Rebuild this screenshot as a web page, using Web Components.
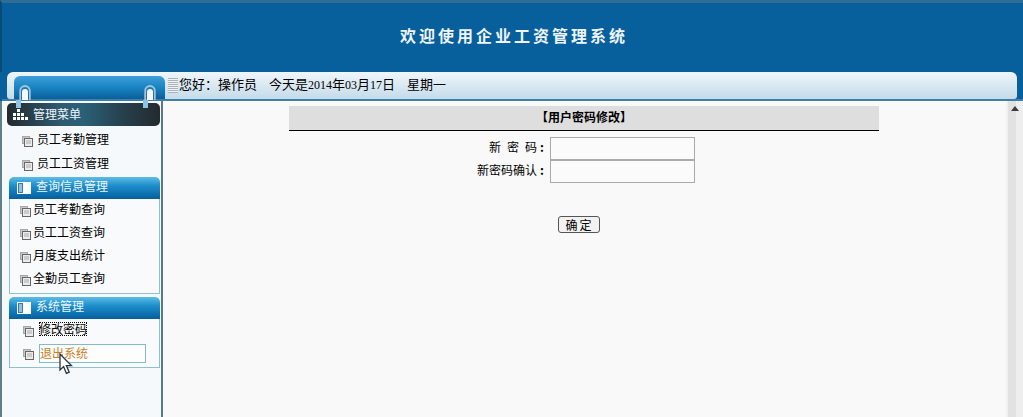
<!DOCTYPE html>
<html lang="zh">
<head>
<meta charset="UTF-8">
<title>企业工资管理系统</title>
<style>
html,body{margin:0;padding:0;height:100%;overflow:hidden;background:#f9f9f9}
body{font:12px "Noto Sans CJK SC","Liberation Sans",sans-serif;color:#000}
tool-bar .n{font:12px "Liberation Serif",serif}
tool-bar .gap{display:inline-block;width:12px}
</style>
</head>
<body>
<app-shell>
  <top-banner slot="top">欢迎使用企业工资管理系统</top-banner>
  <tool-bar slot="bar">您好：操作员<span class="gap"></span>今天是<span class="n">2014</span>年<span class="n">03</span>月<span class="n">17</span>日<span class="gap"></span>星期一</tool-bar>
  <side-menu slot="side">
    <menu-panel title="管理菜单" kind="dark">
      <menu-item kind="tall">员工考勤管理</menu-item>
      <menu-item kind="tall">员工工资管理</menu-item>
    </menu-panel>
    <menu-panel title="查询信息管理" kind="blue">
      <menu-item kind="tight">员工考勤查询</menu-item>
      <menu-item kind="tight">员工工资查询</menu-item>
      <menu-item kind="tight">月度支出统计</menu-item>
      <menu-item kind="tight">全勤员工查询</menu-item>
    </menu-panel>
    <menu-panel title="系统管理" kind="blue">
      <menu-item state="focus">修改密码</menu-item>
      <menu-item state="hover">退出系统</menu-item>
    </menu-panel>
  </side-menu>
  <main-pane slot="main">
    <pwd-form></pwd-form>
  </main-pane>
</app-shell>

<script>
class AppShell extends HTMLElement {
  constructor() {
    super();
    this.attachShadow({ mode: 'open' }).innerHTML = `
      <style>
        :host{display:grid;grid-template-columns:163px 1fr;grid-template-rows:72px 29px 1fr;width:1023px;height:417px;overflow:hidden;position:relative}
        .top{grid-column:1/3}
        .bar{grid-column:1/3}
        .cursor{position:absolute;left:59px;top:353px;width:14px;height:22px}
      </style>
      <div class="top"><slot name="top"></slot></div>
      <div class="bar"><slot name="bar"></slot></div>
      <slot name="side"></slot>
      <slot name="main"></slot>
      <svg class="cursor" viewBox="0 0 14 22"><path d="M1 1V17L4.6 13.6L7.4 20.4L10.2 19.2L7.4 12.6H12.4Z" fill="#fff" stroke="#28323c" stroke-width="1.3"/></svg>`;
  }
}

class TopBanner extends HTMLElement {
  constructor() {
    super();
    this.attachShadow({ mode: 'open' }).innerHTML = `
      <style>
        :host{display:flex;height:72px;box-sizing:border-box;background:#07609b;border-top:3px solid #2f6d94;border-left:2px solid #0b4a78;justify-content:center;align-items:center;padding:0 0 5px 0}
        .t{font:bold 16px "Noto Sans CJK SC",sans-serif;letter-spacing:3px;color:#eef4f8;margin-left:3px}
      </style>
      <div class="t"><slot></slot></div>`;
  }
}

class ToolBar extends HTMLElement {
  constructor() {
    super();
    const pin = x => `<svg class="pin" style="left:${x}px" width="12" height="15" viewBox="0 0 12 15"><path d="M1.2 15V5.8A4.8 4.8 0 0 1 10.8 5.8V15" fill="none" stroke="#a9c3d3" stroke-width="1.8"/><path d="M3 15V7A3 3 0 0 1 9 7V15Z" fill="#f4f8fa"/></svg>`;
    this.attachShadow({ mode: 'open' }).innerHTML = `
      <style>
        :host{display:block;height:29px;box-sizing:border-box;background:#07609b;padding:0 6px 0 7px;position:relative}
        .wrap{height:27px;box-sizing:border-box;border-radius:6px 6px 3px 3px;background:linear-gradient(#eef6fa,#c5dbea);padding:4px 0 0 7px;display:flex;align-items:stretch;gap:3px}
        .tab{width:151px;border-radius:6px 6px 0 0;background:linear-gradient(#3f9fd8 0,#1b87c6 45%,#0a5f9c 100%);flex:none}
        .grip{width:10px;margin:2px 0 6px;background:repeating-linear-gradient(#a9b4bb 0 1px,#eef2f4 1px 2px);flex:none}
        .txt{font-size:13px;line-height:16px;margin-left:-2px;white-space:nowrap;color:#000}
        .line{position:absolute;left:2px;right:0;bottom:0;height:2px;background:#3f7ea6}
        .pin{position:absolute;top:13px;z-index:3}
      </style>
      <div class="wrap">
        <div class="tab"></div>
        <div class="grip"></div>
        <div class="txt"><slot></slot></div>
      </div>
      <div class="line"></div>
      ${pin(19)}${pin(144)}`;
  }
}

class SideMenu extends HTMLElement {
  constructor() {
    super();
    this.attachShadow({ mode: 'open' }).innerHTML = `
      <style>
        :host{display:flex;flex-direction:column;box-sizing:border-box;height:316px;background:linear-gradient(90deg,#5f7f8b 0 2px,#f6f9fb 2px);border-right:2px solid #5b7885;padding:2px 1px 0 9px}
      </style>
      <slot></slot>`;
  }
}

class MenuPanel extends HTMLElement {
  connectedCallback() {
    const dark = this.getAttribute('kind') === 'dark';
    const icon = dark
      ? `<svg width="17" height="13" viewBox="0 0 17 13" fill="#fff"><path d="M4 1h3v3H4zM0 5h3v3H0zM4 5h3v3H4zM8 5h3v3H8zM0 9h3v3H0zM4 9h3v3H4zM8 9h3v3H8zM12 9h3v3h-3z"/></svg>`
      : `<svg width="15" height="12" viewBox="0 0 15 12"><path d="M0 0h7v12H0z" fill="#fff"/><path d="M1 1h5v10H1z" fill="#2a7fb4"/><path d="M2 3h3M2 5h3M2 7h3M2 9h3" stroke="#fff"/><path d="M7 0h7v12H7z" fill="#fff"/></svg>`;
    this.attachShadow({ mode: 'open' }).innerHTML = `
      <style>
        :host{display:block;position:relative;margin-bottom:3px}
        .head{height:22px;display:flex;align-items:center;color:#eef6fa;box-sizing:border-box;border-radius:5px 5px 0 0;
          background:linear-gradient(#5ebce6,#1c8ecb 40%,#0a6aa8 85%,#0a5f98);padding:0 0 1px 8px;gap:4px}
        .head span{margin-top:-4px}
        .head.dark{margin-left:-2px;height:23px;border-radius:5px;padding:0 0 0 6px;gap:3px;
          background:linear-gradient(90deg,#232a2e 0,#2e5a70 35%,#2a6078 50%,#27414e 75%,#242a2e 100%)}
        .head.dark span{margin-top:-3px}
        .body{box-sizing:border-box;border:1px solid #8fc0cf;border-top:0;background:#f8fafc;padding-bottom:2px}
        .body.dark{border:0;background:transparent;padding-bottom:0}
        .strap{position:absolute;top:-3px;width:5px;height:8px;background:#8fc4e4;z-index:2}
      </style>
      <div class="head ${dark ? 'dark' : ''}">${icon}<span>${this.getAttribute('title')}</span></div>
      ${dark ? '<div class="strap" style="left:7px"></div><div class="strap" style="left:134px"></div>' : ''}
      <div class="body ${dark ? 'dark' : ''}"><slot></slot></div>`;
  }
}

class MenuItem extends HTMLElement {
  connectedCallback() {
    const kind = this.getAttribute('kind') || '';
    const state = this.getAttribute('state') || '';
    const box = kind === 'tall'
      ? 'height:24px;padding:1px 0 0 13px;gap:4px'
      : kind === 'tight'
        ? 'height:23px;padding:0 0 5px 10px;gap:2px'
        : 'height:23px;padding:0 0 3px 13px;gap:5px';
    this.attachShadow({ mode: 'open' }).innerHTML = `
      <style>
        :host{display:flex;align-items:center;box-sizing:border-box;${box};white-space:nowrap}
        svg{flex:none;margin-top:${kind === 'tight' ? 6 : 5}px}
        .focus{outline:1px dotted #000;outline-offset:-1px;line-height:14px}
        .hover{color:#c8801f;width:107px;box-sizing:border-box;height:19px;line-height:15px;border:1px solid #83bcc9;background:#fdfdfd;margin-top:3px}
      </style>
      <svg width="11" height="11" viewBox="0 0 11 11"><rect x=".5" y=".5" width="7" height="7" fill="#c8c8c8" stroke="#a8a8a8"/><rect x="2.5" y="2.5" width="8" height="8" fill="#ececec" stroke="#666"/><path d="M4 5h5M4 7h5" stroke="#aaa"/></svg>
      <span class="${state}"><slot></slot></span>`;
  }
}

class MainPane extends HTMLElement {
  constructor() {
    super();
    this.attachShadow({ mode: 'open' }).innerHTML = `
      <style>
        :host{display:grid;grid-template-columns:1fr 17px;height:316px;background:#f9f9f9}
        .bar{background:linear-gradient(90deg,#f1f1f1 0 2px,#e2e2e2 2px 10px,#eeeeee 10px);display:flex;justify-content:center;padding-top:5px}
        .up{width:0;height:0;border:4px solid transparent;border-top:0;border-bottom:5px solid #3c3c3c}
      </style>
      <div><slot></slot></div>
      <div class="bar"><div class="up"></div></div>`;
  }
}

class PwdForm extends HTMLElement {
  constructor() {
    super();
    this.attachShadow({ mode: 'open' }).innerHTML = `
      <style>
        :host{display:block;width:590px;margin:5px 0 0 126px}
        h3{margin:0;height:25px;box-sizing:border-box;background:#dedede;border-bottom:1px solid #000;font:bold 12px/21px "Noto Sans CJK SC",sans-serif;text-align:center}
        .rows{display:grid;grid-template-columns:258px 145px;column-gap:3px;justify-content:start;margin-top:6px}
        label{text-align:right;line-height:19px;height:23px;white-space:nowrap}
        label b{display:inline-block;width:10px;text-align:center}
        .sp{letter-spacing:6px}
        .in{height:23px;box-sizing:border-box;border:1px solid #aaa;background:#fbfbfb}
        .act{display:flex;justify-content:center;margin-top:33px;padding-right:10px}
        button{width:42px;height:17px;padding:0 0 0 1px;box-sizing:border-box;border:1px solid #555;border-radius:3px;background:#f2f2f2;font:12px/15px "Noto Sans CJK SC",sans-serif;letter-spacing:2px;color:#000}
      </style>
      <h3>【用户密码修改】</h3>
      <div class="rows">
        <label><span class="sp">新密</span>码<b>:</b></label><div class="in"></div>
        <label>新密码确认<b>:</b></label><div class="in"></div>
      </div>
      <div class="act"><button>确定</button></div>`;
  }
}

customElements.define('app-shell', AppShell);
customElements.define('top-banner', TopBanner);
customElements.define('tool-bar', ToolBar);
customElements.define('side-menu', SideMenu);
customElements.define('menu-panel', MenuPanel);
customElements.define('menu-item', MenuItem);
customElements.define('main-pane', MainPane);
customElements.define('pwd-form', PwdForm);
</script>
</body>
</html>
